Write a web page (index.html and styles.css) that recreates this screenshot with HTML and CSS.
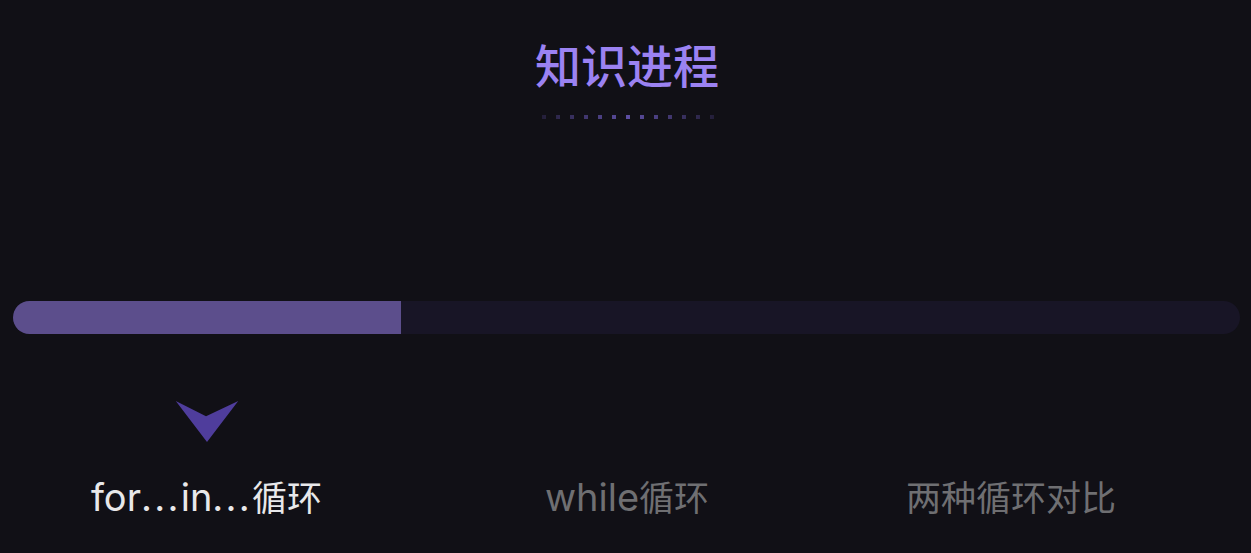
FILE: index.html
```html
<!DOCTYPE html>
<html lang="zh">
<head>
<meta charset="utf-8">
<link rel="stylesheet" href="styles.css">
</head>
<body>
<div class="page">
  <h1 class="title">知识进程</h1>
  <div class="dots"></div>
  <div class="track"><div class="fill" style="width:31.6%"></div></div>
  <div class="tabs">
    <div class="tab active">
      <svg class="chevron" width="64" height="42" viewBox="0 0 64 42"><path d="M0 0 L31 15.5 L64 0 L32 42 Z" fill="#4f3d9c"/></svg>
      <span class="label"><span class="latin">for<span class="ell">...</span>in<span class="ell">...</span></span>循环</span>
    </div>
    <div class="tab">
      <span class="label"><span class="latin">while</span>循环</span>
    </div>
    <div class="tab">
      <span class="label">两种循环对比</span>
    </div>
  </div>
</div>
</body>
</html>
```
FILE: styles.css
```css
html, body {
  margin: 0;
  padding: 0;
  background: #111016;
  height: 100%;
}
.page {
  width: 1251px;
  height: 553px;
  overflow: hidden;
  font-family: "Inter", "Noto Sans CJK SC", sans-serif;
  display: flex;
  flex-direction: column;
}
.title {
  margin: 40px 0 0 0;
  padding-left: 3px;
  font-size: 46px;
  line-height: 46px;
  font-weight: 500;
  color: #9b82f2;
  text-align: center;
  font-family: "Noto Sans CJK SC", sans-serif;
}
.dots {
  margin: 29px auto 0;
  width: 172px;
  height: 4px;
  position: relative;
  left: 2px;
  background: repeating-linear-gradient(to right, #5d4ea3 0 4px, transparent 4px 14px);
  -webkit-mask-image: linear-gradient(to right, rgba(0,0,0,0.25), #000 50%, rgba(0,0,0,0.25));
  mask-image: linear-gradient(to right, rgba(0,0,0,0.25), #000 50%, rgba(0,0,0,0.25));
}
.track {
  margin: 182px 11px 0 13px;
  height: 33px;
  border-radius: 17px;
  background: #181526;
  overflow: hidden;
}
.fill {
  height: 100%;
  background: #5c4e8c;
}
.tabs {
  margin-top: 67px;
  display: grid;
  grid-template-columns: 413px 428px 340px;
  height: 120px;
}
.tab {
  display: flex;
  flex-direction: column;
  align-items: center;
  justify-content: flex-end;
  height: 114px;
}
.chevron {
  display: block;
  margin-bottom: 38px;
}
.label {
  font-size: 35px;
  line-height: 34px;
  color: #6f6f72;
  white-space: nowrap;
}
.latin {
  font-size: 38px;
}
.ell {
  letter-spacing: 2.3px;
}
.tab.active .label {
  color: #e8e8ea;
}
```
